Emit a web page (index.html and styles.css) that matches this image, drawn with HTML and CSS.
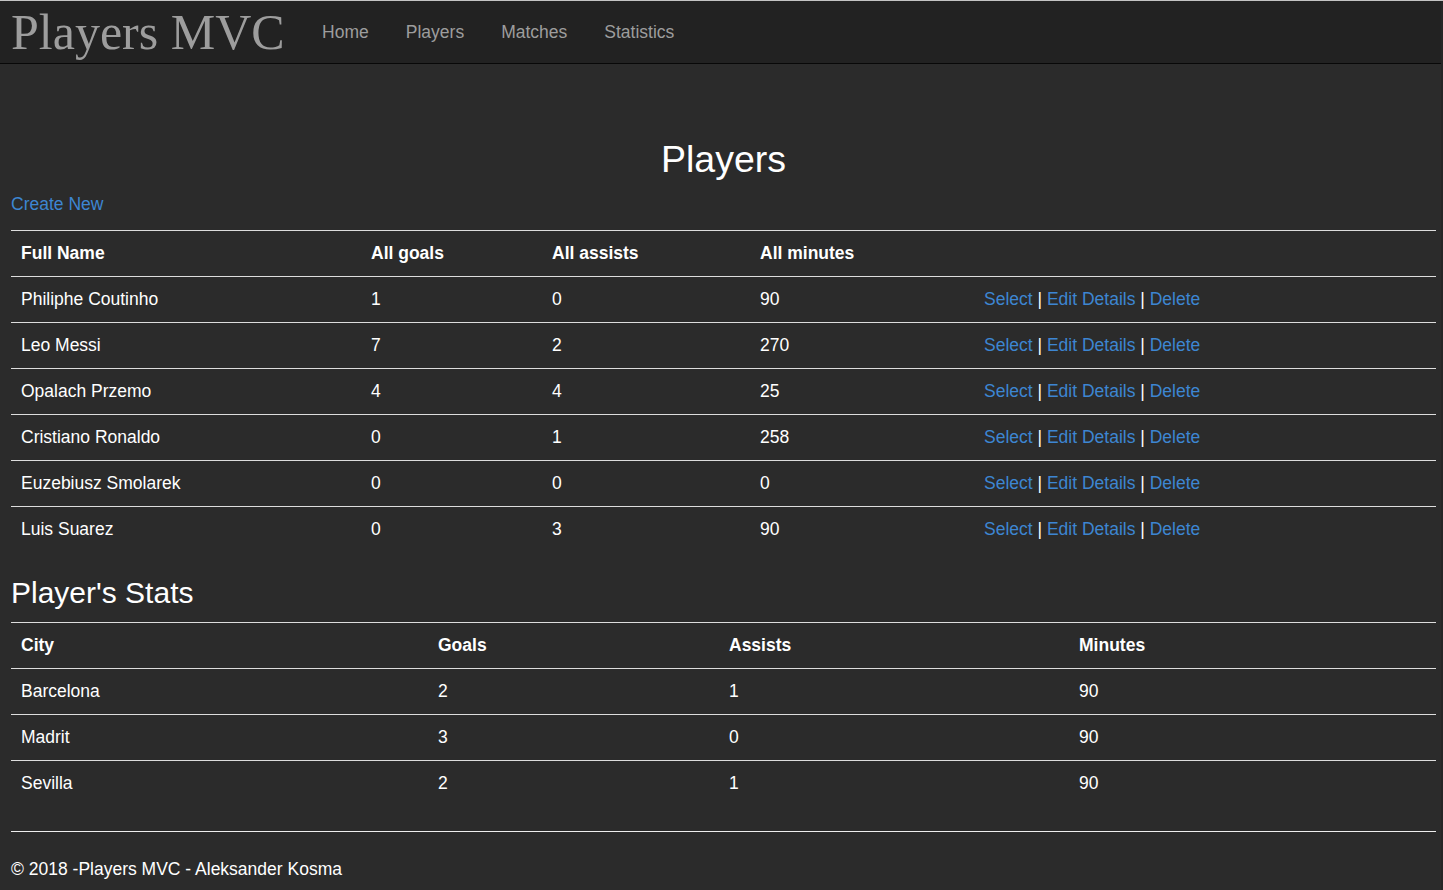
FILE: index.html
```html
<!DOCTYPE html>
<html lang="en">
<head>
<meta charset="utf-8">
<title>Players - Players MVC</title>
<link rel="stylesheet" href="styles.css">
</head>
<body>
<header class="navbar">
  <a class="brand" href="#">Players MVC</a>
  <nav class="nav">
    <a href="#">Home</a>
    <a href="#">Players</a>
    <a href="#">Matches</a>
    <a href="#">Statistics</a>
  </nav>
</header>
<main class="content">
  <h2 class="page-title">Players</h2>
  <p class="create"><a href="#">Create New</a></p>
  <table class="table">
    <colgroup>
      <col class="c1"><col class="c2"><col class="c3"><col class="c4"><col class="c5">
    </colgroup>
    <thead>
      <tr><th>Full Name</th><th>All goals</th><th>All assists</th><th>All minutes</th><th></th></tr>
    </thead>
    <tbody>
      <tr><td>Philiphe Coutinho</td><td>1</td><td>0</td><td>90</td><td class="actions"><a href="#">Select</a> | <a href="#">Edit Details</a> | <a href="#">Delete</a></td></tr>
      <tr><td>Leo Messi</td><td>7</td><td>2</td><td>270</td><td class="actions"><a href="#">Select</a> | <a href="#">Edit Details</a> | <a href="#">Delete</a></td></tr>
      <tr><td>Opalach Przemo</td><td>4</td><td>4</td><td>25</td><td class="actions"><a href="#">Select</a> | <a href="#">Edit Details</a> | <a href="#">Delete</a></td></tr>
      <tr><td>Cristiano Ronaldo</td><td>0</td><td>1</td><td>258</td><td class="actions"><a href="#">Select</a> | <a href="#">Edit Details</a> | <a href="#">Delete</a></td></tr>
      <tr><td>Euzebiusz Smolarek</td><td>0</td><td>0</td><td>0</td><td class="actions"><a href="#">Select</a> | <a href="#">Edit Details</a> | <a href="#">Delete</a></td></tr>
      <tr><td>Luis Suarez</td><td>0</td><td>3</td><td>90</td><td class="actions"><a href="#">Select</a> | <a href="#">Edit Details</a> | <a href="#">Delete</a></td></tr>
    </tbody>
  </table>

  <h3 class="section-title">Player's Stats</h3>
  <table class="table">
    <colgroup>
      <col class="s1"><col class="s2"><col class="s3"><col class="s4">
    </colgroup>
    <thead>
      <tr><th>City</th><th>Goals</th><th>Assists</th><th>Minutes</th></tr>
    </thead>
    <tbody>
      <tr><td>Barcelona</td><td>2</td><td>1</td><td>90</td></tr>
      <tr><td>Madrit</td><td>3</td><td>0</td><td>90</td></tr>
      <tr><td>Sevilla</td><td>2</td><td>1</td><td>90</td></tr>
    </tbody>
  </table>

  <hr class="rule">
  <footer class="footer">
    <p>&copy; 2018 -Players MVC - Aleksander Kosma</p>
  </footer>
</main>
</body>
</html>
```

FILE: styles.css
```css
html {
  background: #2b2b2b;
  border-top: 1px solid #c4c4c4;
}

body {
  margin: 0;
  background: #2b2b2b;
  color: #ffffff;
  font-family: "Liberation Sans", Arial, Helvetica, sans-serif;
  font-size: 17.5px;
  line-height: 25px;
  border-right: 2px solid #262626;
  min-height: 889px;
}

a {
  color: #3d86d2;
  text-decoration: none;
}

.navbar {
  display: flex;
  align-items: flex-start;
  height: 62px;
  background: #222222;
  border-bottom: 1px solid #080808;
  padding-left: 11px;
}

.brand {
  font-family: "Liberation Serif", "Times New Roman", serif;
  font-size: 50px;
  line-height: 62px;
  color: #9d9d9d;
  margin-right: 19px;
  white-space: nowrap;
}

.nav {
  display: flex;
}

.nav a {
  color: #9d9d9d;
  font-size: 17.5px;
  line-height: 62px;
  padding: 0 18.5px;
}

.content {
  padding: 0 5px 0 11px;
}

.page-title {
  margin: 74.5px 0 12.5px;
  text-align: center;
  font-size: 37.5px;
  line-height: 41.25px;
  font-weight: 500;
}

.create {
  margin: 0 0 12.5px;
}

.table {
  width: 1425px;
  border-collapse: collapse;
  table-layout: fixed;
  margin-bottom: 24.5px;
}

.table th,
.table td {
  padding: 10px;
  text-align: left;
  vertical-align: top;
  line-height: 25px;
  white-space: nowrap;
}

.table th {
  font-weight: bold;
}

.table tr {
  border-top: 1px solid #dddddd;
}

.c1 { width: 350px; }
.c2 { width: 181px; }
.c3 { width: 208px; }
.c4 { width: 224px; }
.c5 { width: 462px; }

.s1 { width: 417px; }
.s2 { width: 291px; }
.s3 { width: 350px; }
.s4 { width: 367px; }

.section-title {
  margin: 0 0 12.5px;
  font-size: 30px;
  line-height: 33px;
  font-weight: 500;
}

.rule {
  margin: 25px 0 25px;
  border: 0;
  border-top: 1px solid #eeeeee;
  width: 1425px;
}

.footer p {
  margin: 0;
}
```
